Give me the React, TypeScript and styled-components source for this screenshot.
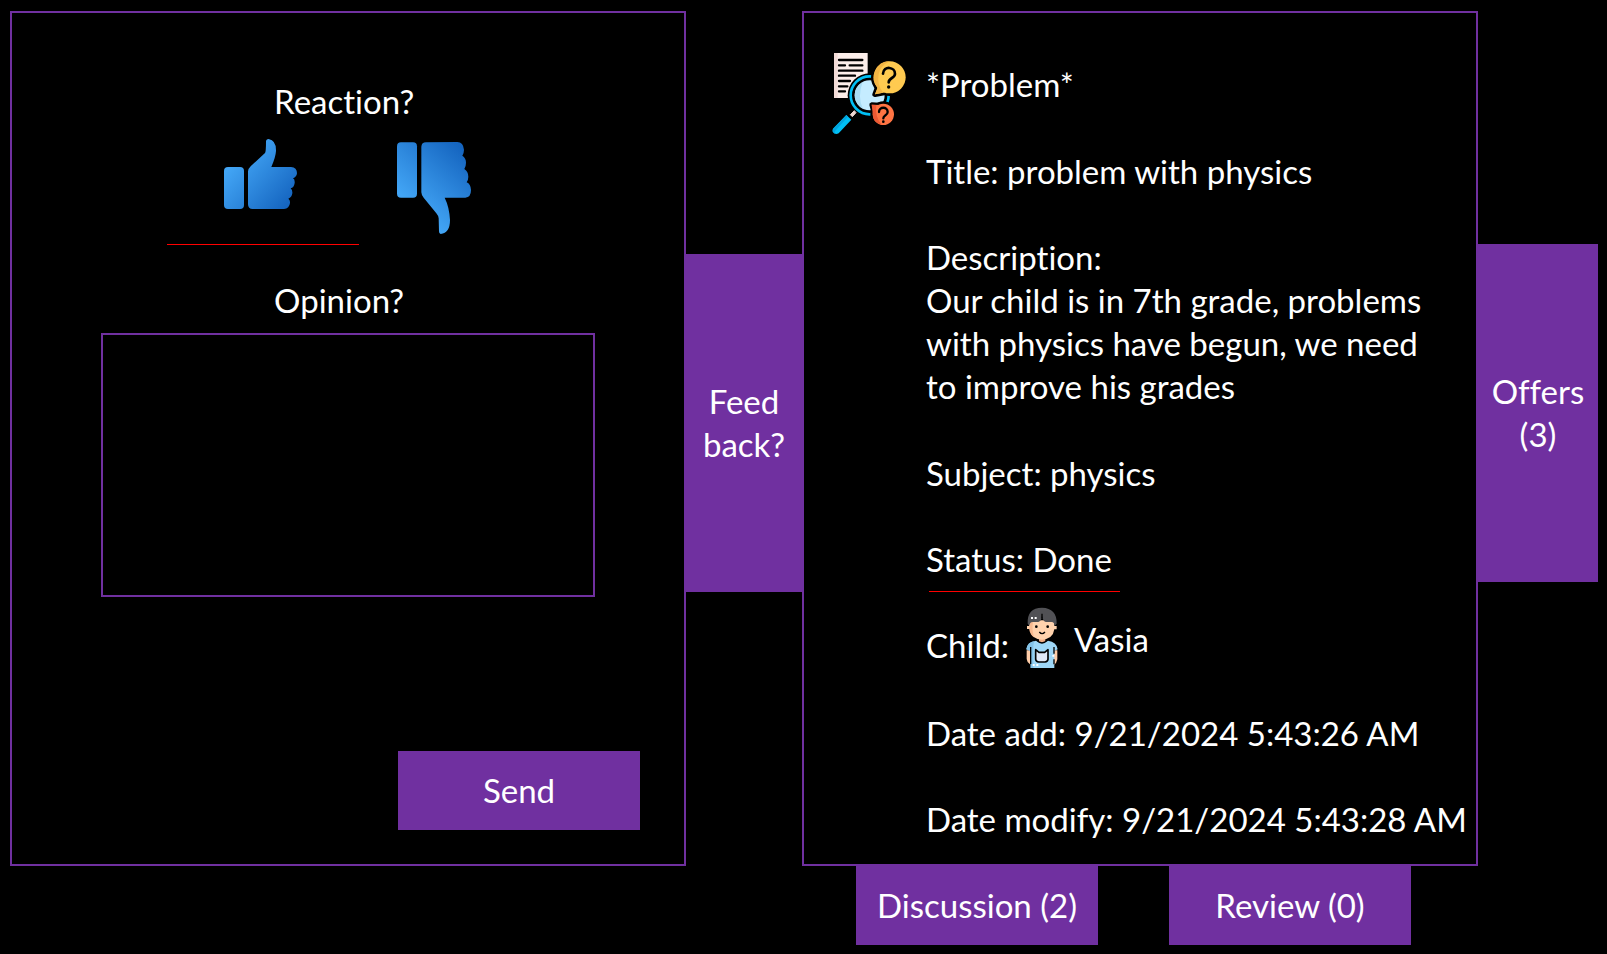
import React, { useState } from "react";
import styled, { createGlobalStyle } from "styled-components";

const PURPLE = "#7030a0";
const RED = "#ff0000";

const GlobalStyle = createGlobalStyle`
  *, *::before, *::after { box-sizing: border-box; }
  body {
    margin: 0;
    background: #000;
    color: #fff;
    font-family: Lato, "Liberation Sans", sans-serif;
    font-size: 33px;
    font-variant-ligatures: none;
    line-height: 43px;
  }
  button, textarea { font: inherit; color: inherit; }
  svg { display: block; flex: none; }
`;

const Page = styled.main`
  display: grid;
  grid-template-columns: minmax(0, 1fr) 116px minmax(0, 1fr) 120px;
  padding: 11px 9px 9px 10px;
`;

const Panel = styled.section`
  border: 2px solid ${PURPLE};
`;

const FeedbackPanel = styled(Panel)`
  display: flex;
  flex-direction: column;
  padding: 67px 0 34px;
`;

const ProblemPanel = styled(Panel)`
  display: flex;
  align-items: flex-start;
  gap: 19px;
  padding: 40px 0 23px 28px;
`;

const SolidButton = styled.button`
  border: 0;
  padding: 0;
  background: ${PURPLE};
  font-variant-ligatures: none;
  cursor: pointer;
`;

const SideTab = styled(SolidButton)<{ $top: number }>`
  height: 338px;
  margin-top: ${(p) => p.$top}px;
  padding: 0 8px;
`;

const WideButton = styled(SolidButton)`
  width: 242px;
  height: 79px;
`;

const SendButton = styled(WideButton)`
  align-self: flex-end;
  margin: auto 44px 0 0;
`;

const BottomTabs = styled.nav`
  grid-column: 3;
  display: flex;
  gap: 71px;
  padding-left: 54px;
`;

const Caption = styled.div`
  margin-left: 39%;
`;

const Reactions = styled.div`
  display: flex;
  margin: 0 0 34px 23%;
`;

const ReactionButton = styled.button<{ $selected: boolean; $width: number; $top: number }>`
  display: flex;
  justify-content: center;
  align-items: flex-start;
  width: ${(p) => p.$width}px;
  height: 122px;
  padding: ${(p) => p.$top}px 4px 0 0;
  border: 0;
  border-bottom: 1px solid ${(p) => (p.$selected ? RED : "transparent")};
  background: none;
  cursor: pointer;
`;

const OpinionBox = styled.textarea`
  display: block;
  height: 264px;
  margin: 11px 89px 0;
  padding: 8px 12px;
  border: 2px solid ${PURPLE};
  border-radius: 0;
  background: transparent;
  outline: none;
  resize: none;
`;

const Details = styled.div`
  flex: 1;
  min-width: 0;
  padding-top: 10px;
`;

const Line = styled.p<{ $after?: number }>`
  margin: 0 0 ${(p) => p.$after ?? 43}px;
`;

const Description = styled(Line)`
  padding-right: 40px;
`;

const Title = styled.h1`
  margin: 0 0 44px;
  font-size: inherit;
  font-weight: inherit;
`;

const StatusRule = styled.hr`
  width: 191px;
  height: 1px;
  margin: 0 0 15px 3px;
  border: 0;
  background: ${RED};
`;

const ChildRow = styled.div`
  display: flex;
  align-items: flex-end;
  gap: 16px;
  margin-bottom: 43px;
`;

const ChildLabel = styled.span`
  padding-bottom: 2px;
`;

const ChildName = styled.span`
  padding-bottom: 8px;
`;

function ThumbUp() {
  return (
    <svg width="73" height="70" viewBox="42 27 219 210" aria-hidden="true">
      <defs>
        <linearGradient id="up" gradientUnits="userSpaceOnUse" x1="70" y1="100" x2="225" y2="235">
          <stop offset="0" stopColor="#42a5f5" />
          <stop offset="1" stopColor="#1565c0" />
        </linearGradient>
      </defs>
      <g fill="url(#up)">
        <rect x="42" y="111" width="60" height="126" rx="12" />
        <path d="M114 124Q114 117 122 109L165 69Q168 65 168 35Q168 27 176 27Q199 31 198 63Q197 81 184 111H243Q261 112 261 130Q260 141 249 145Q255 148 254 159Q252 173 242 175Q248 180 247 190Q245 203 235 206Q241 211 240 219Q238 236 222 237H128Q114 237 114 223Z" />
      </g>
    </svg>
  );
}

function ThumbDown() {
  return (
    <svg width="74" height="92" viewBox="561 36 222 276" aria-hidden="true">
      <defs>
        <linearGradient id="down" gradientUnits="userSpaceOnUse" x1="595" y1="215" x2="750" y2="50">
          <stop offset="0" stopColor="#42a5f5" />
          <stop offset="1" stopColor="#1565c0" />
        </linearGradient>
      </defs>
      <g fill="url(#down)">
        <rect x="561" y="37" width="60" height="166" rx="12" />
        <path d="M634 50Q635 37 648 37L742 36Q760 37 762 59Q762 69 757 77Q768 84 768 98Q768 109 763 117Q775 125 775 140Q775 149 770 157Q782 162 783 180Q783 202 766 203H704Q718 231 720 270Q720 309 692 312Q687 312 687 304L686 265Q685 257 679 250L641 203Q634 194 634 187Z" />
      </g>
    </svg>
  );
}

function ProblemIcon() {
  return (
    <svg width="75" height="82" viewBox="36 38 225 246" aria-hidden="true">
      <path d="M42 38H143V103L100 128L91 173H42Z" fill="#fceeea" />
      <path d="M42 38H53V173H42Z" fill="#f3dcd8" />
      <path
        d="M57 59H127M57 75H75M89 75H127M57 91H127M57 106H105M57 122H90M57 138H82M57 153H75"
        stroke="#000"
        strokeWidth="7"
        strokeLinecap="round"
      />
      <circle cx="149" cy="165" r="66" fill="#000" />
      <circle cx="149" cy="165" r="57" fill="none" stroke="#00bff5" strokeWidth="8" />
      <circle cx="149" cy="165" r="45" fill="#c5ecff" />
      <path d="M116 134A45 45 0 0 0 129 205Q111 171 128 125Z" fill="#a8dcf4" />
      <g fill="#ffca50">
        <g stroke="#000" strokeWidth="16" strokeLinejoin="round">
          <path d="M174 138L165 162L196 156Z" />
          <circle cx="209" cy="111" r="48" />
        </g>
        <path d="M174 138L165 162L196 156Z" />
        <circle cx="209" cy="111" r="48" />
      </g>
      <path d="M209 63A48 48 0 0 0 173 143L165 162L190 157Q170 135 176 101Q181 76 209 63Z" fill="#f3b544" />
      <path
        d="M189 100C191 75 226 79 225 101C224 115 207 111 206 126"
        fill="none"
        stroke="#000"
        strokeWidth="8"
        strokeLinecap="round"
      />
      <circle cx="206" cy="140" r="5" />
      <g fill="#ff7443">
        <g stroke="#000" strokeWidth="14" strokeLinejoin="round">
          <path d="M155 193L178 194L160 212Z" />
          <circle cx="190" cy="222" r="32" />
        </g>
        <path d="M155 193L178 194L160 212Z" />
        <circle cx="190" cy="222" r="32" />
      </g>
      <path d="M155 193L169 194Q164 232 186 254Q158 248 158 219Z" fill="#ec5934" />
      <path
        d="M177 215C177 198 203 198 203 215C203 226 190 223 190 234"
        fill="none"
        stroke="#000"
        strokeWidth="7"
        strokeLinecap="round"
      />
      <circle cx="190" cy="244" r="4" />
      <path d="M91 223L103 211L108 217L97 229Z" fill="#eed6d1" stroke="#eed6d1" strokeWidth="3" />
      <path d="M79 224L94 238L56 279Q45 285 38 274Q36 267 43 261Z" fill="#00bff5" />
      <path d="M79 224L84 229L46 271Q42 277 45 280Q38 276 38 268Z" fill="#00a4df" />
    </svg>
  );
}

function ChildIcon() {
  return (
    <svg width="33" height="62" viewBox="42 24 99 186" aria-hidden="true">
      <path d="M47 154H57V196Q48 191 47 180ZM129 154H139V181Q137 193 129 197Z" fill="#ffcda8" />
      <path d="M84 116H103V131H84Z" fill="#efab83" />
      <path d="M54 81H48V90H56Q61 121 93 122Q126 120 130 91H137V81H130V64H55Z" fill="#ffd2ad" />
      <path d="M55 69V93Q58 108 69 115Q62 91 66 70Z" fill="#f8b98f" />
      <path d="M50 74Q48 26 93 26Q138 27 137 74L131 80Q130 70 122 69H105Q96 68 93 51Q91 67 82 69H65Q56 70 55 80Z" fill="#515155" />
      <path d="M93 44V58" stroke="#000" strokeWidth="4" />
      <path d="M60 54H66V60H60ZM71 54H77V60H71Z" fill="#fff" />
      <circle cx="76" cy="83" r="4" />
      <circle cx="110" cy="83" r="4" />
      <path d="M85 99Q93 109 102 99" fill="none" stroke="#000" strokeWidth="4" />
      <path d="M75 125Q92 136 111 125Q137 128 140 151L130 156V207H59V156L46 151Q49 129 75 125Z" fill="#9ed7f7" />
      <path d="M70 127Q49 129 46 151L59 156V207H67V145Q67 134 70 127Z" fill="#84c3e9" />
      <path d="M77 124Q93 140 109 124" fill="none" stroke="#000" strokeWidth="4" />
      <path d="M59 144V195M129 144V164M129 181V196" stroke="#000" strokeWidth="4" />
      <path
        d="M74 152L84 160H101L111 152V181Q110 188 102 189H83Q75 188 74 181Z"
        fill="#e0e9f8"
        stroke="#000"
        strokeWidth="5"
        strokeLinejoin="round"
      />
      <path d="M65 195H71V201H65ZM76 195H82V201H76ZM124 168H130V173H124Z" fill="#fff" />
    </svg>
  );
}

export default function App() {
  const [reaction, setReaction] = useState<"like" | "dislike">("like");

  return (
    <>
      <GlobalStyle />
      <Page>
        <FeedbackPanel aria-label="Feedback">
          <Caption>Reaction?</Caption>
          <Reactions role="group" aria-label="Reaction">
            <ReactionButton
              type="button"
              aria-label="Like"
              aria-pressed={reaction === "like"}
              $selected={reaction === "like"}
              $width={192}
              $top={16}
              onClick={() => setReaction("like")}
            >
              <ThumbUp />
            </ReactionButton>
            <ReactionButton
              type="button"
              aria-label="Dislike"
              aria-pressed={reaction === "dislike"}
              $selected={reaction === "dislike"}
              $width={154}
              $top={19}
              onClick={() => setReaction("dislike")}
            >
              <ThumbDown />
            </ReactionButton>
          </Reactions>
          <Caption as="label" htmlFor="opinion">
            Opinion?
          </Caption>
          <OpinionBox id="opinion" />
          <SendButton type="button">Send</SendButton>
        </FeedbackPanel>

        <SideTab type="button" $top={243}>
          Feed
          <br />
          back?
        </SideTab>

        <ProblemPanel aria-label="Problem">
          <ProblemIcon />
          <Details>
            <Title>*Problem*</Title>
            <Line>Title: problem with physics</Line>
            <Line $after={0}>Description:</Line>
            <Description $after={44}>
              Our child is in 7th grade, problems with physics have begun, we need to improve his grades
            </Description>
            <Line>Subject: physics</Line>
            <Line $after={10}>Status: Done</Line>
            <StatusRule />
            <ChildRow>
              <ChildLabel>Child:</ChildLabel>
              <ChildIcon />
              <ChildName>Vasia</ChildName>
            </ChildRow>
            <Line>Date add: 9/21/2024 5:43:26 AM</Line>
            <Line $after={0}>Date modify: 9/21/2024 5:43:28 AM</Line>
          </Details>
        </ProblemPanel>

        <SideTab type="button" $top={233}>
          Offers
          <br />
          (3)
        </SideTab>

        <BottomTabs aria-label="Problem sections">
          <WideButton type="button">Discussion (2)</WideButton>
          <WideButton type="button">Review (0)</WideButton>
        </BottomTabs>
      </Page>
    </>
  );
}
